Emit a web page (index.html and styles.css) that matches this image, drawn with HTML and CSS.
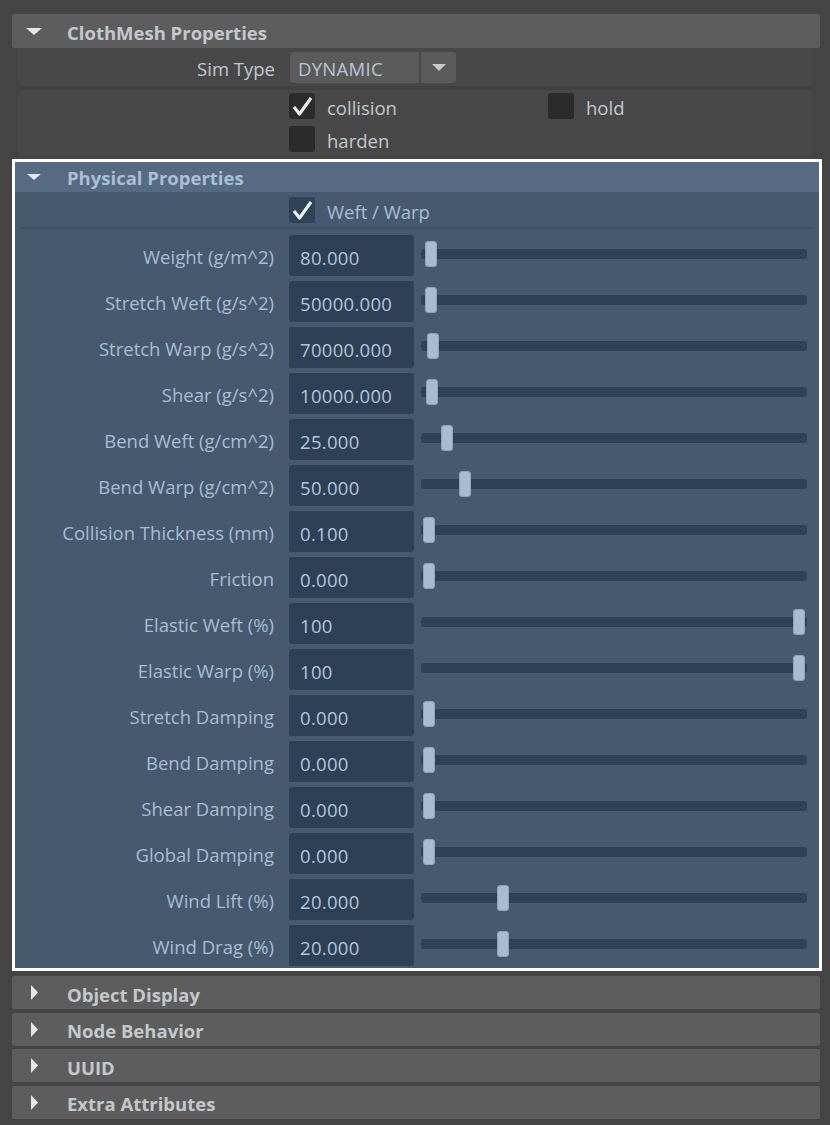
FILE: index.html
```html
<!DOCTYPE html>
<html>
<head>
<meta charset="utf-8">
<link rel="stylesheet" href="styles.css">
</head>
<body>
<div class="editor">
  <div class="hdr gray-hdr">
    <svg class="tri-down" width="16" height="7" viewBox="0 0 16 7"><polygon points="0,0 16,0 8,7" fill="#e6e6e6"/></svg>
    <span>ClothMesh Properties</span>
  </div>
  <div class="cm-body">
    <div class="sim-row">
      <div class="lbl gray-lbl">Sim Type</div>
      <div class="dropdown">DYNAMIC</div>
      <div class="drop-btn"><svg width="14" height="7" viewBox="0 0 14 7"><polygon points="0,0 14,0 7,7" fill="#c9c9c9"/></svg></div>
    </div>
    <div class="cm-sep"></div>
    <div class="checks">
      <div class="check"><span class="box gray-box"><svg width="26" height="26" viewBox="0 0 26 26"><polyline points="5,14 10.5,21 22,5" fill="none" stroke="#e9e9e9" stroke-width="3.2" stroke-linejoin="round"/></svg></span><span class="gray-lbl">collision</span></div>
      <div class="check"><span class="box gray-box"></span><span class="gray-lbl">hold</span></div>
      <div class="check"><span class="box gray-box"></span><span class="gray-lbl">harden</span></div>
    </div>
  </div>

  <div class="phys">
    <div class="hdr phys-hdr">
      <svg class="tri-down-s" width="14" height="6" viewBox="0 0 14 6"><polygon points="0,0 14,0 7,6" fill="#dfe6ee"/></svg>
      <span>Physical Properties</span>
    </div>
    <div class="weft-row">
      <div class="check"><span class="box blue-box"><svg width="26" height="26" viewBox="0 0 26 26"><polyline points="5,14 10.5,21 22,5" fill="none" stroke="#e9eef3" stroke-width="3.2" stroke-linejoin="round"/></svg></span><span class="blue-lbl">Weft / Warp</span></div>
    </div>
    <div class="phys-sep"></div>
    <div class="rows">
      <div class="row"><div class="lbl">Weight (g/m^2)</div><div class="field">80.000</div><div class="slider"><div class="track"></div><div class="handle" style="left:4px"></div></div></div>
      <div class="row"><div class="lbl">Stretch Weft (g/s^2)</div><div class="field">50000.000</div><div class="slider"><div class="track"></div><div class="handle" style="left:4px"></div></div></div>
      <div class="row"><div class="lbl">Stretch Warp (g/s^2)</div><div class="field">70000.000</div><div class="slider"><div class="track"></div><div class="handle" style="left:6px"></div></div></div>
      <div class="row"><div class="lbl">Shear (g/s^2)</div><div class="field">10000.000</div><div class="slider"><div class="track"></div><div class="handle" style="left:5px"></div></div></div>
      <div class="row"><div class="lbl">Bend Weft (g/cm^2)</div><div class="field">25.000</div><div class="slider"><div class="track"></div><div class="handle" style="left:20px"></div></div></div>
      <div class="row"><div class="lbl">Bend Warp (g/cm^2)</div><div class="field">50.000</div><div class="slider"><div class="track"></div><div class="handle" style="left:38px"></div></div></div>
      <div class="row"><div class="lbl">Collision Thickness (mm)</div><div class="field">0.100</div><div class="slider"><div class="track"></div><div class="handle" style="left:2px"></div></div></div>
      <div class="row"><div class="lbl">Friction</div><div class="field">0.000</div><div class="slider"><div class="track"></div><div class="handle" style="left:2px"></div></div></div>
      <div class="row"><div class="lbl">Elastic Weft (%)</div><div class="field">100</div><div class="slider"><div class="track"></div><div class="handle" style="left:372px"></div></div></div>
      <div class="row"><div class="lbl">Elastic Warp (%)</div><div class="field">100</div><div class="slider"><div class="track"></div><div class="handle" style="left:372px"></div></div></div>
      <div class="row"><div class="lbl">Stretch Damping</div><div class="field">0.000</div><div class="slider"><div class="track"></div><div class="handle" style="left:2px"></div></div></div>
      <div class="row"><div class="lbl">Bend Damping</div><div class="field">0.000</div><div class="slider"><div class="track"></div><div class="handle" style="left:2px"></div></div></div>
      <div class="row"><div class="lbl">Shear Damping</div><div class="field">0.000</div><div class="slider"><div class="track"></div><div class="handle" style="left:2px"></div></div></div>
      <div class="row"><div class="lbl">Global Damping</div><div class="field">0.000</div><div class="slider"><div class="track"></div><div class="handle" style="left:2px"></div></div></div>
      <div class="row"><div class="lbl">Wind Lift (%)</div><div class="field">20.000</div><div class="slider"><div class="track"></div><div class="handle" style="left:76px"></div></div></div>
      <div class="row"><div class="lbl">Wind Drag (%)</div><div class="field">20.000</div><div class="slider"><div class="track"></div><div class="handle" style="left:76px"></div></div></div>
    </div>
  </div>

  <div class="collapsed-list">
    <div class="hdr gray-hdr closed"><svg class="tri-right" width="7" height="15" viewBox="0 0 7 15"><polygon points="0,0 7,7.5 0,15" fill="#e6e6e6"/></svg><span>Object Display</span></div>
    <div class="hdr gray-hdr closed"><svg class="tri-right" width="7" height="15" viewBox="0 0 7 15"><polygon points="0,0 7,7.5 0,15" fill="#e6e6e6"/></svg><span>Node Behavior</span></div>
    <div class="hdr gray-hdr closed"><svg class="tri-right" width="7" height="15" viewBox="0 0 7 15"><polygon points="0,0 7,7.5 0,15" fill="#e6e6e6"/></svg><span>UUID</span></div>
    <div class="hdr gray-hdr closed"><svg class="tri-right" width="7" height="15" viewBox="0 0 7 15"><polygon points="0,0 7,7.5 0,15" fill="#e6e6e6"/></svg><span>Extra Attributes</span></div>
  </div>
</div>
</body>
</html>
```

FILE: styles.css
```css
* { box-sizing: border-box; }

html, body {
  margin: 0;
  padding: 0;
  background: #444444;
}

body {
  font-family: "Open Sans", "Noto Sans", "DejaVu Sans", sans-serif;
  font-size: 18.5px;
  width: 830px;
  height: 1125px;
  overflow: hidden;
}

.editor {
  padding: 14px 8px 0 12px;
}

.hdr {
  display: flex;
  align-items: center;
  font-weight: bold;
}

.hdr span {
  padding-top: 3px;
}

.gray-hdr {
  height: 34px;
  margin-right: 2px;
  background: #5d5d5d;
  color: #c4c8cc;
  border-radius: 2px;
}

.tri-down {
  margin-left: 14px;
  margin-right: 25px;
  flex: none;
}

/* ClothMesh body */
.cm-body {
  margin: 0 9px 0 6px;
  background: #484848;
}

.sim-row {
  height: 38px;
  display: flex;
  align-items: center;
}

.lbl {
  width: 257px;
  flex: none;
  text-align: right;
  white-space: nowrap;
  padding-top: 2px;
}

.gray-lbl {
  color: #c2c9d0;
}

.check .gray-lbl, .check .blue-lbl {
  padding-top: 3px;
}

.dropdown {
  margin-left: 15px;
  width: 129px;
  height: 31px;
  background: #5b5b5b;
  border-radius: 3px 0 0 3px;
  color: #b9c6d3;
  padding-left: 8px;
  padding-top: 3px;
  display: flex;
  align-items: center;
  letter-spacing: 0.3px;
}

.drop-btn {
  margin-left: 2px;
  width: 35px;
  height: 31px;
  background: #5b5b5b;
  border-radius: 0 3px 3px 0;
  display: flex;
  align-items: center;
  justify-content: center;
}

.cm-sep {
  height: 4px;
  background: #414141;
}

.checks {
  display: grid;
  grid-template-columns: 259px auto;
  row-gap: 7px;
  padding: 3px 0 3px 271px;
}

.check {
  display: flex;
  align-items: center;
  height: 26px;
}

.box {
  width: 26px;
  height: 26px;
  border-radius: 3px;
  margin-right: 12px;
  flex: none;
  display: block;
}

.box svg { display: block; }

.gray-box { background: #2b2b2b; }
.blue-box { background: #2f4358; }

/* Physical properties */
.phys {
  margin-top: 4px;
  border: 3px solid #ffffff;
  background: #46596e;
}

.phys-hdr {
  height: 30px;
  background: #566b81;
  color: #a9bfd6;
}

.phys-hdr span {
  padding-top: 0;
}

.tri-down-s {
  margin-left: 12px;
  margin-right: 26px;
  flex: none;
}

.weft-row {
  height: 35px;
  display: flex;
  align-items: center;
  padding-left: 274px;
}

.blue-lbl { color: #a9bed4; }

.phys-sep {
  height: 2px;
  margin: 0 4px 0 5px;
  background: #3e5064;
}

.rows {
  display: flex;
  flex-direction: column;
  gap: 5px;
  padding: 6px 0 2px;
}

.row {
  height: 41px;
  display: flex;
  align-items: center;
}

.row .lbl {
  width: 259px;
  color: #a8bdd3;
}

.field {
  margin-left: 15px;
  width: 125px;
  height: 41px;
  flex: none;
  background: #2d4055;
  border-radius: 3px;
  color: #b3c6da;
  padding-left: 11px;
  display: flex;
  align-items: center;
  padding-top: 3px;
  letter-spacing: 0.3px;
}

.slider {
  position: relative;
  margin-left: 7px;
  margin-right: 12px;
  flex: 1;
  height: 41px;
  display: flex;
  align-items: center;
  padding-bottom: 3px;
}

.track {
  width: 100%;
  height: 10px;
  background: #2d4157;
  border-radius: 3px;
}

.handle {
  position: absolute;
  top: 6px;
  width: 12px;
  height: 26px;
  background: #a7bbd1;
  border: 1px solid #8fa4bb;
  border-radius: 3px;
}

/* collapsed sections */
.collapsed-list {
  margin-top: 5px;
  display: flex;
  flex-direction: column;
  gap: 3.5px;
}

.closed {
  height: 33px;
}

.tri-right {
  margin-left: 19px;
  margin-right: 29px;
  flex: none;
}
```
